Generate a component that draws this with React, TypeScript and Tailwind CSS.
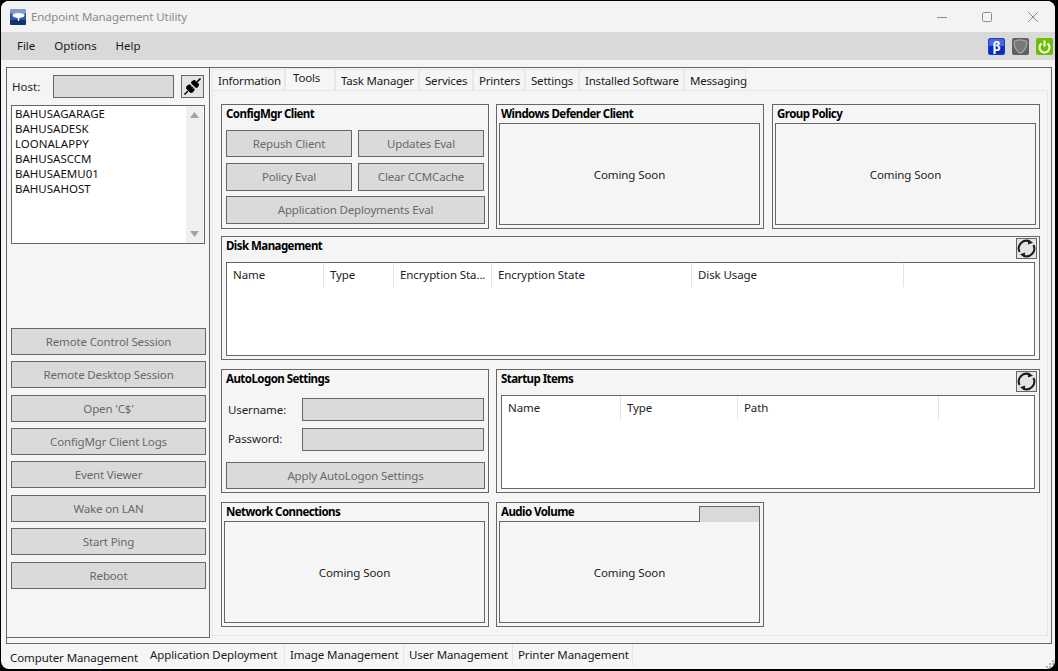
import React from "react";

const ff = { fontFamily: '"Noto Sans", "Open Sans", sans-serif' };

function Btn({ label, className }: { label: string; className: string }) {
  return (
    <div className={"flex items-center justify-center border border-[#666666] bg-[#dadada] text-[#696969] text-[11.5px] tracking-[-0.15px] whitespace-nowrap " + className}>
      {label}
    </div>
  );
}

function Title({ children }: { children: React.ReactNode }) {
  return <div className="text-[11.5px] font-bold tracking-[-0.55px] text-black leading-[16px] whitespace-nowrap">{children}</div>;
}

function Refresh() {
  return (
    <div className="w-[21px] h-[21px] border border-[#666666] bg-[#e4e4e4] flex items-center justify-center">
      <svg width="19" height="19" viewBox="0 0 19 19" fill="none">
        <path d="M2.600 13A7.700 7.700 0 0 1 12.500 2.400" stroke="#1a1a1a" strokeWidth="2" />
        <path d="M16.400 6A7.700 7.700 0 0 1 6.500 16.600" stroke="#1a1a1a" strokeWidth="2" />
        <path d="M11.500 0.500L16 3.800L10.800 5.600Z" fill="#1a1a1a" />
        <path d="M7.500 18.500L3 15.200L8.200 13.400Z" fill="#1a1a1a" />
      </svg>
    </div>
  );
}

function Soon({ title, extra }: { title: string; extra?: React.ReactNode }) {
  return (
    <div className="relative w-[268px] h-full border border-[#666666] pl-[2px] pr-[3px] pb-[3px] flex flex-col">
      <div className="h-[18px] pl-[2px] flex items-center"><Title>{title}</Title></div>
      {extra}
      <div className="flex-1 border border-[#666666] flex items-center justify-center pt-[2px] text-[11.5px] tracking-[-0.1px] text-[#222222]">Coming Soon</div>
    </div>
  );
}

function TableHead({ cols }: { cols: [string, number][] }) {
  return (
    <div className="flex h-[24px] items-center">
      {cols.map(([c, w]) => (
        <div key={c} style={{ width: w }} className="h-full shrink-0 border-r border-[#e4e4e4] pl-[6px] flex items-center text-[11.5px] tracking-[-0.1px] text-[#222222] whitespace-nowrap overflow-hidden">
          {c}
        </div>
      ))}
    </div>
  );
}

const hosts = ["BAHUSAGARAGE", "BAHUSADESK", "LOONALAPPY", "BAHUSASCCM", "BAHUSAEMU01", "BAHUSAHOST"];
const leftBtns: [string, string][] = [
  ["Remote Control Session", "mb-[6px]"],
  ["Remote Desktop Session", "mb-[7px]"],
  ["Open 'C$'", "mb-[6px]"],
  ["ConfigMgr Client Logs", "mb-[6px]"],
  ["Event Viewer", "mb-[7px]"],
  ["Wake on LAN", "mb-[6px]"],
  ["Start Ping", "mb-[7px]"],
  ["Reboot", ""],
];
const topTabs: [string, number][] = [
  ["Information", 73],
  ["Tools", 50],
  ["Task Manager", 84],
  ["Services", 54],
  ["Printers", 52],
  ["Settings", 54],
  ["Installed Software", 105],
  ["Messaging", 62],
];
const bottomTabs: [string, number][] = [
  ["Computer Management", 139],
  ["Application Deployment", 140],
  ["Image Management", 119],
  ["User Management", 109],
  ["Printer Management", 120],
];

export default function App() {
  return (
    <div style={ff} className="w-[1058px] h-[671px] bg-black overflow-hidden text-[#222222]">
      <div className="relative w-[1054px] h-[668px] ml-[1px] mt-[1px] rounded-[8px] bg-[#f5f5f5] overflow-hidden flex flex-col">
        {/* title bar */}
        <div className="h-[31px] shrink-0 flex items-center bg-[#f3f3f3]">
          <svg className="ml-[9px]" width="16" height="16" viewBox="0 0 16 16">
            <rect width="16" height="16" rx="2" fill="#2d58a8" />
            <rect y="0" width="16" height="5" rx="2" fill="#7f9ccc" />
            <rect y="11" width="16" height="5" rx="1" fill="#14306f" />
            <ellipse cx="8.500" cy="6.500" rx="6" ry="2.500" fill="#ffffff" />
            <path d="M7.500 8H9.500L9 12H8Z" fill="#ffffff" />
          </svg>
          <div className="ml-[5px] text-[11.5px] tracking-[-0.1px] text-[#8a8a8a] whitespace-nowrap">Endpoint Management Utility</div>
          <div className="flex-1" />
          <svg width="102" height="12" viewBox="0 0 102 12" className="mr-[16px] mt-[1px]" fill="none" stroke="#8c8c8c" strokeWidth="1">
            <path d="M0 6.500H10" />
            <rect x="45.500" y="1.500" width="9" height="9" rx="1" />
            <path d="M91 1L101 11M101 1L91 11" />
          </svg>
        </div>
        {/* menu */}
        <div className="h-[28px] shrink-0 bg-[#d9d9d9] flex items-center text-[11.5px] text-[#1a1a1a] tracking-[-0.05px]">
          <div className="ml-[16px]">File</div>
          <div className="ml-[19px]">Options</div>
          <div className="ml-[19px]">Help</div>
          <div className="flex-1" />
          <div className="mt-[1px] w-[17px] h-[17px] rounded-[2px] bg-[#0a2cc4] border border-[#1a3ccf] flex items-center justify-center text-white text-[13px] leading-none relative overflow-hidden">
            <div className="absolute left-0 right-0 top-0 h-[7px] bg-[#4a68d8]" />
            <span className="relative font-bold">β</span>
          </div>
          <svg className="ml-[7px] mt-[1px]" width="17" height="17" viewBox="0 0 17 17">
            <rect width="17" height="17" rx="2" fill="#5f5f5f" />
            <path d="M2 3.500C6 1.500 11 1.500 15 3.500C15 9 12.500 13 8.500 15.300C4.500 13 2 9 2 3.500Z" fill="#787878" stroke="#a8a8a8" strokeWidth="1.200" />
          </svg>
          <svg className="ml-[7px] mt-[1px]" width="17" height="17" viewBox="0 0 17 17" fill="none">
            <rect width="17" height="17" rx="2" fill="#6cc000" />
            <path d="M5.500 5.500A5 5 0 1 0 11.500 5.500" stroke="#ffffff" strokeWidth="2" />
            <path d="M8.500 2.500V8.500" stroke="#ffffff" strokeWidth="2" />
          </svg>
          <div className="w-[2px]" />
        </div>

        {/* main */}
        <div className="ml-[5px] mt-[7px] w-[1046px] h-[577px] shrink-0 border border-[#666666] flex items-start">
          {/* left panel */}
          <div className="w-[203px] h-[570px] shrink-0 border-r border-b border-[#666666] pl-[4px] pr-[2px] flex flex-col">
            <div className="flex items-center h-[23px] mt-[7px]">
              <div className="w-[42px] pl-[1px] text-[11.5px] text-[#222222]">Host:</div>
              <div className="w-[121px] h-[23px] border border-[#666666] bg-[#dadada]" />
              <div className="ml-[7px] w-[23px] h-[23px] border border-[#666666] bg-[#e4e4e4] flex items-center justify-center">
                <svg width="19" height="19" viewBox="0 0 19 19" fill="none" stroke="#000">
                  <path d="M1.500 17.500L5 14M14 5L17.500 1.500" strokeWidth="1.600" />
                  <path d="M3.500 11.500L7.500 15.500C10 15.500 11 14 11.200 12L7 7.800C5 8 3.500 9 3.500 11.500Z" fill="#000" strokeWidth="1" />
                  <path d="M8.500 6.200L12.800 10.500C15 10.500 15.500 9 15.500 7L12 3.500C10 3.500 8.500 4.200 8.500 6.200Z" fill="#000" strokeWidth="1" />
                  <path d="M8.500 9.500L9.500 8.500M10 11.500L11 10.500" stroke="#e4e4e4" strokeWidth="1" />
                </svg>
              </div>
            </div>
            <div className="mt-[7px] w-[194px] h-[139px] border border-[#666666] bg-white flex">
              <div className="flex-1 pl-[3px] text-[11.5px] leading-[15px] text-[#111111]">
                {hosts.map((h) => <div key={h}>{h}</div>)}
              </div>
              <div className="w-[17px] bg-[#f0f0f0] flex flex-col items-center justify-between py-[6px] mr-[1px]">
                <svg width="9" height="6" viewBox="0 0 9 6"><path d="M4.500 0L9 6H0Z" fill="#a3a3a3" /></svg>
                <svg width="9" height="6" viewBox="0 0 9 6"><path d="M4.500 6L9 0H0Z" fill="#a3a3a3" /></svg>
              </div>
            </div>
            <div className="flex-1" />
            <div className="flex flex-col mb-[48px]">
              {leftBtns.map(([l, m]) => <Btn key={l} label={l} className={"w-[195px] h-[27px] shrink-0 " + m} />)}
            </div>
          </div>

          {/* tabs area */}
          <div className="flex-1 h-[569px] flex flex-col pl-[2px]">
            <div className="flex h-[22px] items-end shrink-0 text-[11.5px] tracking-[-0.2px]">
              {topTabs.map(([t, w]) =>
                t === "Tools" ? (
                  <div key={t} style={{ width: w }} className="h-[23px] bg-[#f6f6f6] border-t border-x border-[#e8e8e8] pl-[7px] flex items-start text-[#1a1a1a] -mb-[1px]">{t}</div>
                ) : (
                  <div key={t} style={{ width: w }} className="h-[21px] border border-b-0 border-[#e8e8e8] pl-[5px] pt-[2px] flex items-center text-[#1a1a1a] whitespace-nowrap">{t}</div>
                )
              )}
            </div>
            <div className="w-[836px] h-[546px] border border-[#e6e6e6] pt-[13px] pl-[8px] flex flex-col">
              {/* row 1 */}
              <div className="flex h-[125px] shrink-0">
                <div className="w-[268px] h-full border border-[#666666] pl-[4px] flex flex-col">
                  <div className="h-[18px] flex items-center"><Title>ConfigMgr Client</Title></div>
                  <div className="flex gap-[6px] mt-[7px]">
                    <Btn label="Repush Client" className="w-[126px] h-[27px]" />
                    <Btn label="Updates Eval" className="w-[126px] h-[27px]" />
                  </div>
                  <div className="flex gap-[6px] mt-[6px]">
                    <Btn label="Policy Eval" className="w-[126px] h-[28px]" />
                    <Btn label="Clear CCMCache" className="w-[126px] h-[28px]" />
                  </div>
                  <Btn label="Application Deployments Eval" className="w-[259px] h-[28px] mt-[5px]" />
                </div>
                <div className="ml-[7px] h-full"><Soon title="Windows Defender Client" /></div>
                <div className="ml-[8px] h-full"><Soon title="Group Policy" /></div>
              </div>
              {/* row 2 */}
              <div className="relative mt-[7px] w-[819px] h-[124px] shrink-0 border border-[#666666] pl-[4px] pr-[4px] pb-[3px] flex flex-col">
                <div className="h-[18px] flex items-center"><Title>Disk Management</Title></div>
                <div className="absolute right-[2px] top-[1px]"><Refresh /></div>
                <div className="mt-[7px] flex-1 border border-[#666666] bg-white">
                  <TableHead cols={[["Name", 97], ["Type", 70], ["Encryption Sta...", 98], ["Encryption State", 200], ["Disk Usage", 212]]} />
                </div>
              </div>
              {/* row 3 */}
              <div className="flex mt-[9px] h-[124px] shrink-0">
                <div className="w-[268px] h-full border border-[#666666] pl-[4px] flex flex-col">
                  <div className="h-[18px] flex items-center"><Title>AutoLogon Settings</Title></div>
                  <div className="flex items-center mt-[10px]">
                    <div className="w-[76px] pl-[2px] text-[11.5px] tracking-[-0.1px] text-[#222222]">Username:</div>
                    <div className="w-[182px] h-[23px] border border-[#666666] bg-[#dadada]" />
                  </div>
                  <div className="flex items-center mt-[7px]">
                    <div className="w-[76px] pl-[2px] pb-[2px] text-[11.5px] tracking-[-0.1px] text-[#222222]">Password:</div>
                    <div className="w-[182px] h-[23px] border border-[#666666] bg-[#dadada]" />
                  </div>
                  <Btn label="Apply AutoLogon Settings" className="w-[259px] h-[27px] mt-[11px]" />
                </div>
                <div className="relative ml-[7px] w-[544px] h-full border border-[#666666] pl-[4px] pr-[4px] pb-[3px] flex flex-col">
                  <div className="h-[18px] flex items-center"><Title>Startup Items</Title></div>
                  <div className="absolute right-[2px] top-[1px]"><Refresh /></div>
                  <div className="mt-[7px] flex-1 border border-[#666666] bg-white">
                    <TableHead cols={[["Name", 119], ["Type", 117], ["Path", 201]]} />
                  </div>
                </div>
              </div>
              {/* row 4 */}
              <div className="flex mt-[9px] h-[125px] shrink-0">
                <Soon title="Network Connections" />
                <div className="ml-[7px] h-full">
                  <Soon
                    title="Audio Volume"
                    extra={<div className="absolute right-[3px] top-[3px] w-[61px] h-[16px] border border-[#666666] border-b-0 bg-[#d9d9d9]" />}
                  />
                </div>
              </div>
            </div>
          </div>
        </div>

        {/* bottom tabs */}
        <div className="ml-[5px] flex h-[24px] shrink-0 text-[11.5px] tracking-[-0.1px] text-[#1a1a1a]">
          {bottomTabs.map(([t, w], i) =>
            i === 0 ? (
              <div key={t} style={{ width: w }} className="h-[24px] pl-[4px] flex items-center pt-[3px] whitespace-nowrap">{t}</div>
            ) : (
              <div key={t} style={{ width: w }} className="h-[22px] border-r border-[#e6e6e6] pl-[5px] flex items-center whitespace-nowrap">{t}</div>
            )
          )}
        </div>

        {/* resize grip */}
        <svg className="absolute right-0 bottom-0" width="10" height="10" viewBox="0 0 10 10" fill="#b4b4b4">
          <rect x="7" y="1" width="2" height="2" />
          <rect x="4" y="4" width="2" height="2" />
          <rect x="7" y="4" width="2" height="2" />
          <rect x="1" y="7" width="2" height="2" />
          <rect x="4" y="7" width="2" height="2" />
          <rect x="7" y="7" width="2" height="2" />
        </svg>
      </div>
    </div>
  );
}
